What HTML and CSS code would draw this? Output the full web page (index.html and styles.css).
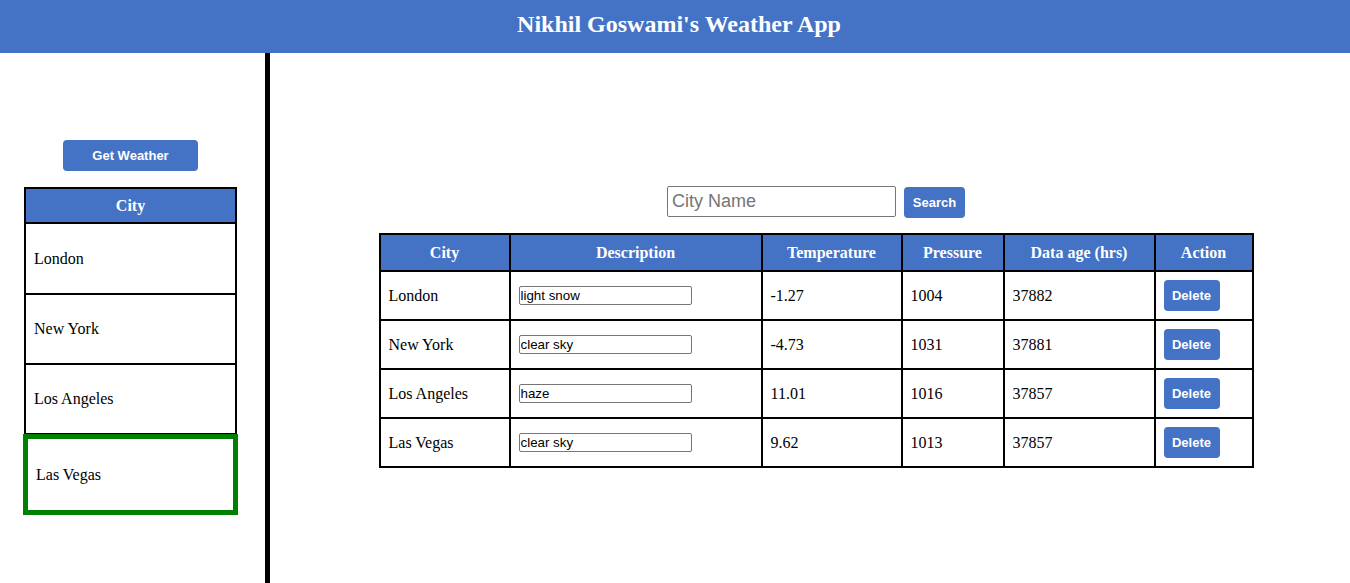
FILE: index.html
```html
<!DOCTYPE html>
<html lang="en">
<head>
<meta charset="utf-8">
<title>Nikhil Goswami's Weather App</title>
<link rel="stylesheet" href="styles.css">
</head>
<body>
<header class="app-header">
  <h1 class="app-title">Nikhil Goswami's Weather App</h1>
</header>
<div class="layout">
  <aside class="sidebar">
    <div class="sidebar-inner">
      <button class="btn btn-get">Get Weather</button>
      <div class="city-list">
        <div class="city-list-head">City</div>
        <div class="city-item">London</div>
        <div class="city-item">New York</div>
        <div class="city-item">Los Angeles</div>
        <div class="city-item selected">Las Vegas</div>
      </div>
    </div>
  </aside>
  <main class="main">
    <div class="search-row">
      <input class="search-input" type="text" placeholder="City Name">
      <button class="btn btn-search">Search</button>
    </div>
    <table class="weather-table">
      <colgroup>
        <col class="c-city"><col class="c-desc"><col class="c-temp"><col class="c-pres"><col class="c-age"><col class="c-act">
      </colgroup>
      <thead>
        <tr><th>City</th><th>Description</th><th>Temperature</th><th>Pressure</th><th>Data age (hrs)</th><th>Action</th></tr>
      </thead>
      <tbody>
        <tr><td>London</td><td><input class="desc-input" type="text" value="light snow"></td><td>-1.27</td><td>1004</td><td>37882</td><td><button class="btn btn-delete">Delete</button></td></tr>
        <tr><td>New York</td><td><input class="desc-input" type="text" value="clear sky"></td><td>-4.73</td><td>1031</td><td>37881</td><td><button class="btn btn-delete">Delete</button></td></tr>
        <tr><td>Los Angeles</td><td><input class="desc-input" type="text" value="haze"></td><td>11.01</td><td>1016</td><td>37857</td><td><button class="btn btn-delete">Delete</button></td></tr>
        <tr><td>Las Vegas</td><td><input class="desc-input" type="text" value="clear sky"></td><td>9.62</td><td>1013</td><td>37857</td><td><button class="btn btn-delete">Delete</button></td></tr>
      </tbody>
    </table>
  </main>
</div>
</body>
</html>
```
FILE: styles.css
```css
* { box-sizing: border-box; }
html, body { margin: 0; padding: 0; height: 100%; }
body {
  font-family: "Liberation Serif", "Times New Roman", serif;
  font-size: 16px;
  color: #000;
  background: #fff;
  display: flex;
  flex-direction: column;
  overflow: hidden;
}
.app-header {
  height: 53px;
  background: #4472c4;
  display: flex;
  align-items: center;
  justify-content: center;
  flex: 0 0 auto;
  padding-bottom: 6px;
}
.app-title {
  margin: 0;
  color: #fff;
  font-size: 24px;
  font-weight: bold;
  line-height: 1;
  padding-left: 8px;
}
.layout {
  flex: 1 1 auto;
  display: flex;
}
.sidebar {
  width: 265px;
  flex: 0 0 265px;
  padding-top: 87px;
}
.sidebar-inner {
  width: 213px;
  margin-left: 24px;
  display: flex;
  flex-direction: column;
  align-items: center;
}
.btn {
  background: #4472c4;
  color: #fff;
  border: none;
  border-radius: 4px;
  font-family: "Liberation Sans", Arial, sans-serif;
  font-weight: bold;
  font-size: 13px;
  padding: 0;
  cursor: pointer;
}
.btn-get { width: 135px; height: 31px; }
.city-list {
  width: 213px;
  margin-top: 16px;
  border: 2px solid #000;
  border-bottom: none;
}
.city-list-head {
  height: 35px;
  background: #4472c4;
  color: #fff;
  font-weight: bold;
  text-align: center;
  border-bottom: 2px solid #000;
  display: flex;
  align-items: center;
  justify-content: center;
}
.city-item {
  height: 70px;
  border-bottom: 2px solid #000;
  padding-left: 8px;
  display: flex;
  align-items: center;
}
.city-item:nth-child(2) { height: 71px; }
.city-item.selected {
  height: 81px;
  border: 5px solid #008000;
  margin: -1px -3px 0;
  padding-left: 8px;
}
.main {
  flex: 1 1 auto;
  border-left: 5px solid #000;
  padding-top: 133px;
  padding-left: 11px;
  display: flex;
  flex-direction: column;
  align-items: center;
}
.search-row {
  display: flex;
  align-items: flex-start;
  gap: 8px;
  height: 32px;
  margin-left: 1px;
}
.search-input {
  width: 229px;
  height: 31px;
  border: 1px solid #767676;
  border-radius: 2px;
  padding: 0 4px;
  font-family: "Liberation Sans", Arial, sans-serif;
  font-size: 18px;
  color: #000;
}
.search-input::placeholder { color: #757575; }
.btn-search { width: 61px; height: 31px; margin-top: 1px; }
.weather-table {
  margin-top: 15px;
  margin-left: 1px;
  border-collapse: collapse;
  table-layout: fixed;
  width: 873px;
  border: 2px solid #000;
}
.c-city { width: 130px; }
.c-desc { width: 252px; }
.c-temp { width: 140px; }
.c-pres { width: 102px; }
.c-age { width: 151px; }
.c-act { width: 98px; }
.weather-table th,
.weather-table td {
  border: 2px solid #000;
  text-align: left;
  vertical-align: middle;
}
.weather-table th {
  background: #4472c4;
  color: #fff;
  font-weight: bold;
  text-align: center;
  padding: 8px;
  line-height: 19px;
}
.weather-table td {
  padding: 8px;
  line-height: 18px;
  height: 49px;
}
.desc-input {
  display: block;
  width: 173px;
  height: 19px;
  border: 1px solid #767676;
  border-radius: 2px;
  padding: 0 1px;
  font-family: "Liberation Sans", Arial, sans-serif;
  font-size: 13.33px;
  color: #000;
}
.btn-delete { display: block; width: 56px; height: 31px; }
```
